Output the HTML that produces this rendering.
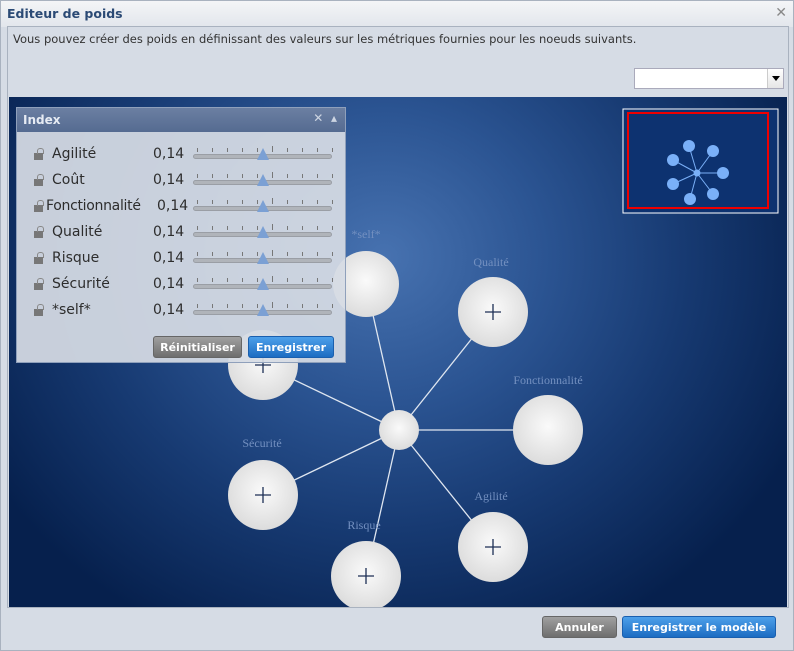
<!DOCTYPE html>
<html><head><meta charset="utf-8"><style>
*{box-sizing:border-box;margin:0;padding:0}
body{width:794px;height:651px;overflow:hidden;background:#d6dce5;font-family:"DejaVu Sans",sans-serif;position:relative}
.win{position:absolute;left:0;top:0;width:794px;height:651px;border:1px solid #a9b2bf;background:#d6dce5}
.title{position:absolute;left:0;top:0;width:792px;height:26px;background:linear-gradient(#f4f5f7,#e2e6ec);}
.title b{position:absolute;left:6px;top:5px;font-size:12.5px;color:#2b4a75}
.close{position:absolute;right:6px;top:4px;font-size:14px;color:#888}
.inner{position:absolute;left:6px;top:25px;width:782px;height:582px;border:1px solid #a9b2bf;background:#d6dce5}
.desc{position:absolute;left:12px;top:31px;font-size:11.5px;color:#333}
.combo{position:absolute;left:633px;top:67px;width:150px;height:21px;border:1px solid #aab;background:#fff}
.combo i{position:absolute;right:0;top:0;width:16px;height:19px;border-left:1px solid #ccc;background:linear-gradient(#fff,#e6e6e6)}
.combo i:after{content:"";position:absolute;left:4px;top:7px;border:4px solid transparent;border-top:5px solid #000}
.canvas{position:absolute;left:8px;top:96px;width:778px;height:510px;background:radial-gradient(ellipse 460px 420px at 375px 160px,#4772b0 0%,#2b5492 35%,#173a72 65%,#06204d 100%)}
.panel{position:absolute;left:15px;top:106px;width:330px;height:256px;border:1px solid #8fa0bb;background:rgba(214,219,228,0.93)}
.ph{height:24px;background:linear-gradient(#6b7fa2,#556b91);color:#e6ebf3;font-weight:bold;font-size:12px;padding:5px 6px}
.ph span{position:absolute;right:8px;top:3px;font-weight:normal;color:#cdd5e2;font-size:12px}
.row{position:absolute;left:0;height:20px;width:330px;font-size:14px;color:#2d2d2d}
.lock{position:absolute;left:17px;top:7px;width:9px;height:7px;background:#777}
.lock:before{content:"";position:absolute;left:3px;top:-5px;width:5px;height:5px;border:1.5px solid #888;border-bottom:none;border-radius:3px 3px 0 0}
.lbl{position:absolute;left:35px;top:0px}
.val{position:absolute;left:136px;top:0px}
.track{position:absolute;left:176px;top:8px;width:139px;height:5px;border-radius:3px;background:#b0b4ba;border:1px solid #9a9ea5}
.tick{position:absolute;top:-7px;width:1px;height:4px;background:#777}
.thumb{position:absolute;left:63px;top:-7px;width:0;height:0;border-left:6px solid transparent;border-right:6px solid transparent;border-bottom:12px solid #7ba0d4}
.btn{position:absolute;height:22px;border-radius:3px;color:#fff;font-weight:bold;font-size:11px;text-align:center;line-height:21px}
.grey{background:linear-gradient(#a0a0a0,#6e6e6e);border:1px solid #666}
.blue{background:linear-gradient(#4da0ea,#1c6cc2);border:1px solid #1a5fae}
</style></head><body>
<div class="win">
<div class="title"><b>Editeur de poids</b><span class="close">✕</span></div>
<div class="inner"></div>
<div class="desc">Vous pouvez créer des poids en définissant des valeurs sur les métriques fournies pour les noeuds suivants.</div>
<div class="combo"><i></i></div>
<div class="canvas">
<svg width="778" height="510" style="position:absolute;left:0;top:0">
<defs><radialGradient id="g" cx="0.5" cy="0.45" r="0.55"><stop offset="0" stop-color="#fafafa"/><stop offset="1" stop-color="#dcdcdc"/></radialGradient></defs>
<g stroke="#dfe6f0" stroke-width="1.3">
<line x1="390" y1="333" x2="357" y2="187"/><line x1="390" y1="333" x2="484" y2="215"/><line x1="390" y1="333" x2="539" y2="333"/>
<line x1="390" y1="333" x2="484" y2="450"/><line x1="390" y1="333" x2="357" y2="479"/><line x1="390" y1="333" x2="254" y2="398"/><line x1="390" y1="333" x2="254" y2="268"/>
</g>
<g fill="url(#g)">
<circle cx="357" cy="187" r="33"/><circle cx="484" cy="215" r="35"/><circle cx="539" cy="333" r="35"/><circle cx="484" cy="450" r="35"/>
<circle cx="357" cy="479" r="35"/><circle cx="254" cy="398" r="35"/><circle cx="254" cy="268" r="35"/><circle cx="390" cy="333" r="20"/>
</g>
<g stroke="#1d2f55" stroke-width="1.3">
<path d="M476 215h16M484 207v16M476 450h16M484 442v16M349 479h16M357 471v16M246 398h16M254 390v16M246 268h16M254 260v16"/>
</g>
<g fill="#7390c0" font-family="Liberation Serif,serif" font-size="12" text-anchor="middle">
<text x="357" y="141">*self*</text><text x="482" y="169">Qualité</text><text x="539" y="287">Fonctionnalité</text>
<text x="482" y="403">Agilité</text><text x="355" y="432">Risque</text><text x="253" y="350">Sécurité</text>
</g>
<rect x="614" y="12" width="155" height="104" fill="#0d3270" stroke="#fff" stroke-width="1"/>
<rect x="619" y="16" width="140" height="95" fill="none" stroke="#e00" stroke-width="2"/>
<g stroke="#7ab0f8" stroke-width="1"><path d="M688 76L680 49M688 76L704 54M688 76L714 76M688 76L704 97M688 76L681 102M688 76L664 87M688 76L664 63"/></g>
<g fill="#7ab0f8"><circle cx="680" cy="49" r="6"/><circle cx="704" cy="54" r="6"/><circle cx="714" cy="76" r="6"/><circle cx="704" cy="97" r="6"/><circle cx="681" cy="102" r="6"/><circle cx="664" cy="87" r="6"/><circle cx="664" cy="63" r="6"/><circle cx="688" cy="76" r="3.5"/></g>
</svg>
</div>
<div class="panel">
<div class="ph">Index<span>✕ &nbsp;▴</span></div>
<div class="row" style="top:38px"><i class="lock"></i><span class="lbl">Agilité</span><span class="val">0,14</span><div class="track"><div class="thumb"></div></div></div>
<div class="row" style="top:64px"><i class="lock"></i><span class="lbl">Coût</span><span class="val">0,14</span><div class="track"><div class="thumb"></div></div></div>
<div class="row" style="top:90px"><i class="lock"></i><span class="lbl" style="left:29px;letter-spacing:-0.3px">Fonctionnalité</span><span class="val" style="left:140px">0,14</span><div class="track"><div class="thumb"></div></div></div>
<div class="row" style="top:116px"><i class="lock"></i><span class="lbl">Qualité</span><span class="val">0,14</span><div class="track"><div class="thumb"></div></div></div>
<div class="row" style="top:142px"><i class="lock"></i><span class="lbl">Risque</span><span class="val">0,14</span><div class="track"><div class="thumb"></div></div></div>
<div class="row" style="top:168px"><i class="lock"></i><span class="lbl">Sécurité</span><span class="val">0,14</span><div class="track"><div class="thumb"></div></div></div>
<div class="row" style="top:194px"><i class="lock"></i><span class="lbl">*self*</span><span class="val">0,14</span><div class="track"><div class="thumb"></div></div></div>
<div class="btn grey" style="left:136px;top:228px;width:89px">Réinitialiser</div>
<div class="btn blue" style="left:231px;top:228px;width:86px">Enregistrer</div>
</div>
<div class="btn grey" style="left:541px;top:615px;width:75px">Annuler</div>
<div class="btn blue" style="left:621px;top:615px;width:154px">Enregistrer le modèle</div>
</div>
<script>
document.querySelectorAll('.track').forEach(t=>{for(let i=0;i<10;i++){const d=document.createElement('div');d.className='tick';d.style.left=(3+i*15)+'px';if(i==5){d.style.height='6px';d.style.top='-9px'}t.appendChild(d)}});
</script>
</body></html>
